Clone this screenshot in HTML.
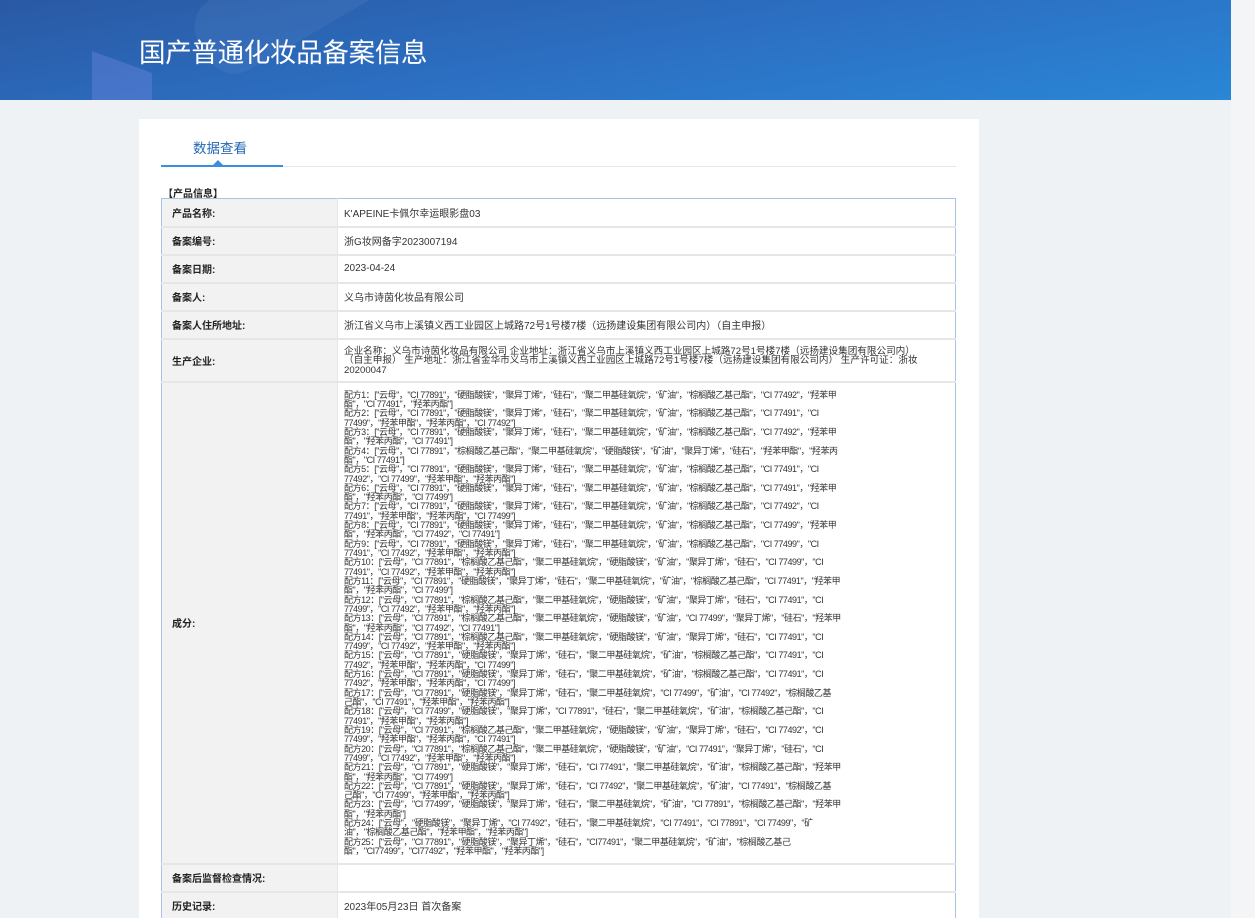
<!DOCTYPE html>
<html><head><meta charset="utf-8">
<style>
*{margin:0;padding:0;box-sizing:border-box}
html,body{overflow:hidden}
body{width:1255px;height:918px;background:#eef2f5;font-family:"Liberation Sans","Noto Sans CJK SC",sans-serif;position:relative}
.banner{position:absolute;left:0;top:0;width:1231px;height:100px;background:linear-gradient(170deg,#2a59a4 0%,#2c6fc2 50%,#2a86d6 100%);overflow:hidden}
.banner .s1{position:absolute;left:190px;top:-40px;width:200px;height:80px;background:rgba(255,255,255,.05);transform:rotate(-30deg);border-radius:30px}
.banner .s2{position:absolute;left:92px;top:62px;width:60px;height:60px;background:rgba(120,140,230,.35);transform:skewY(20deg)}
.banner h1{position:absolute;left:139px;top:31px;color:#fff;font-size:26.5px;font-weight:normal;letter-spacing:-0.3px;font-family:"Liberation Sans","Noto Sans CJK SC",sans-serif}
.strip{position:absolute;left:1231px;top:0;width:24px;height:918px;background:#f3f5f7}
.card{position:absolute;left:139px;top:119px;width:840px;height:799px;background:#fff;overflow:hidden}
.tab{position:absolute;left:20px;top:18px;width:122px;text-align:center;color:#2468b4;font-size:13.5px}
.tabline{position:absolute;left:22px;top:47px;width:795px;height:1px;background:#e4e8ec}
.tabline2{position:absolute;left:22px;top:46px;width:122px;height:2px;background:#3a8ee0}
.tri{position:absolute;left:74px;top:41px;width:0;height:0;border-left:5px solid transparent;border-right:5px solid transparent;border-bottom:5px solid #3a8ee0}
.sec{position:absolute;left:24px;top:66px;font-size:10px;font-weight:bold;color:#222}
table{position:absolute;left:22px;top:79px;width:795px;border-collapse:collapse;border:1px solid #a9c3e6;font-size:10px;color:#333}
td{border-bottom:2px solid #e6e6e6;vertical-align:middle}
td.l{width:176px;background:#f2f2f2;font-weight:bold;padding-left:10px;border-right:1px solid #e6e6e6;color:#222}
td.v{padding-left:6px}
.f{padding-top:7px!important;padding-bottom:5px}
.f div{white-space:nowrap;font-size:9px;line-height:9.32px;height:9.32px;letter-spacing:-0.45px}
</style></head><body>
<div class="banner"><div class="s1"></div><div class="s2"></div><h1>国产普通化妆品备案信息</h1></div>
<div class="strip"></div>
<div class="card">
<div class="tab">数据查看</div>
<div class="tabline"></div><div class="tabline2"></div><div class="tri"></div>
<div class="sec">【产品信息】</div>
<table>
<tr style="height:28px"><td class="l">产品名称:</td><td class="v">K'APEINE卡佩尔幸运眼影盘03</td></tr>
<tr style="height:28px"><td class="l">备案编号:</td><td class="v">浙G妆网备字2023007194</td></tr>
<tr style="height:28px"><td class="l">备案日期:</td><td class="v">2023-04-24</td></tr>
<tr style="height:28px"><td class="l">备案人:</td><td class="v">义乌市诗茵化妆品有限公司</td></tr>
<tr style="height:28px"><td class="l">备案人住所地址:</td><td class="v">浙江省义乌市上溪镇义西工业园区上城路72号1号楼7楼（远扬建设集团有限公司内）（自主申报）</td></tr>
<tr style="height:43px"><td class="l">生产企业:</td><td class="v" style="font-size:9.6px;line-height:9.5px;padding-top:2px">企业名称：义乌市诗茵化妆品有限公司 企业地址：浙江省义乌市上溪镇义西工业园区上城路72号1号楼7楼（远扬建设集团有限公司内）<br>（自主申报） 生产地址：浙江省金华市义乌市上溪镇义西工业园区上城路72号1号楼7楼（远扬建设集团有限公司内） 生产许可证：浙妆<br>20200047</td></tr>
<tr style="height:482px"><td class="l">成分:</td><td class="v f">
<div>配方1：["云母"，"CI 77891"，"硬脂酸镁"，"聚异丁烯"，"硅石"，"聚二甲基硅氧烷"，"矿油"，"棕榈酸乙基己酯"，"CI 77492"，"羟苯甲</div><div>酯"，"CI 77491"，"羟苯丙酯"]</div>
<div>配方2：["云母"，"CI 77891"，"硬脂酸镁"，"聚异丁烯"，"硅石"，"聚二甲基硅氧烷"，"矿油"，"棕榈酸乙基己酯"，"CI 77491"，"CI</div><div>77499"，"羟苯甲酯"，"羟苯丙酯"，"CI 77492"]</div>
<div>配方3：["云母"，"CI 77891"，"硬脂酸镁"，"聚异丁烯"，"硅石"，"聚二甲基硅氧烷"，"矿油"，"棕榈酸乙基己酯"，"CI 77492"，"羟苯甲</div><div>酯"，"羟苯丙酯"，"CI 77491"]</div>
<div>配方4：["云母"，"CI 77891"，"棕榈酸乙基己酯"，"聚二甲基硅氧烷"，"硬脂酸镁"，"矿油"，"聚异丁烯"，"硅石"，"羟苯甲酯"，"羟苯丙</div><div>酯"，"CI 77491"]</div>
<div>配方5：["云母"，"CI 77891"，"硬脂酸镁"，"聚异丁烯"，"硅石"，"聚二甲基硅氧烷"，"矿油"，"棕榈酸乙基己酯"，"CI 77491"，"CI</div><div>77492"，"CI 77499"，"羟苯甲酯"，"羟苯丙酯"]</div>
<div>配方6：["云母"，"CI 77891"，"硬脂酸镁"，"聚异丁烯"，"硅石"，"聚二甲基硅氧烷"，"矿油"，"棕榈酸乙基己酯"，"CI 77491"，"羟苯甲</div><div>酯"，"羟苯丙酯"，"CI 77499"]</div>
<div>配方7：["云母"，"CI 77891"，"硬脂酸镁"，"聚异丁烯"，"硅石"，"聚二甲基硅氧烷"，"矿油"，"棕榈酸乙基己酯"，"CI 77492"，"CI</div><div>77491"，"羟苯甲酯"，"羟苯丙酯"，"CI 77499"]</div>
<div>配方8：["云母"，"CI 77891"，"硬脂酸镁"，"聚异丁烯"，"硅石"，"聚二甲基硅氧烷"，"矿油"，"棕榈酸乙基己酯"，"CI 77499"，"羟苯甲</div><div>酯"，"羟苯丙酯"，"CI 77492"，"CI 77491"]</div>
<div>配方9：["云母"，"CI 77891"，"硬脂酸镁"，"聚异丁烯"，"硅石"，"聚二甲基硅氧烷"，"矿油"，"棕榈酸乙基己酯"，"CI 77499"，"CI</div><div>77491"，"CI 77492"，"羟苯甲酯"，"羟苯丙酯"]</div>
<div>配方10：["云母"，"CI 77891"，"棕榈酸乙基己酯"，"聚二甲基硅氧烷"，"硬脂酸镁"，"矿油"，"聚异丁烯"，"硅石"，"CI 77499"，"CI</div><div>77491"，"CI 77492"，"羟苯甲酯"，"羟苯丙酯"]</div>
<div>配方11：["云母"，"CI 77891"，"硬脂酸镁"，"聚异丁烯"，"硅石"，"聚二甲基硅氧烷"，"矿油"，"棕榈酸乙基己酯"，"CI 77491"，"羟苯甲</div><div>酯"，"羟苯丙酯"，"CI 77499"]</div>
<div>配方12：["云母"，"CI 77891"，"棕榈酸乙基己酯"，"聚二甲基硅氧烷"，"硬脂酸镁"，"矿油"，"聚异丁烯"，"硅石"，"CI 77491"，"CI</div><div>77499"，"CI 77492"，"羟苯甲酯"，"羟苯丙酯"]</div>
<div>配方13：["云母"，"CI 77891"，"棕榈酸乙基己酯"，"聚二甲基硅氧烷"，"硬脂酸镁"，"矿油"，"CI 77499"，"聚异丁烯"，"硅石"，"羟苯甲</div><div>酯"，"羟苯丙酯"，"CI 77492"，"CI 77491"]</div>
<div>配方14：["云母"，"CI 77891"，"棕榈酸乙基己酯"，"聚二甲基硅氧烷"，"硬脂酸镁"，"矿油"，"聚异丁烯"，"硅石"，"CI 77491"，"CI</div><div>77499"，"CI 77492"，"羟苯甲酯"，"羟苯丙酯"]</div>
<div>配方15：["云母"，"CI 77891"，"硬脂酸镁"，"聚异丁烯"，"硅石"，"聚二甲基硅氧烷"，"矿油"，"棕榈酸乙基己酯"，"CI 77491"，"CI</div><div>77492"，"羟苯甲酯"，"羟苯丙酯"，"CI 77499"]</div>
<div>配方16：["云母"，"CI 77891"，"硬脂酸镁"，"聚异丁烯"，"硅石"，"聚二甲基硅氧烷"，"矿油"，"棕榈酸乙基己酯"，"CI 77491"，"CI</div><div>77492"，"羟苯甲酯"，"羟苯丙酯"，"CI 77499"]</div>
<div>配方17：["云母"，"CI 77891"，"硬脂酸镁"，"聚异丁烯"，"硅石"，"聚二甲基硅氧烷"，"CI 77499"，"矿油"，"CI 77492"，"棕榈酸乙基</div><div>己酯"，"CI 77491"，"羟苯甲酯"，"羟苯丙酯"]</div>
<div>配方18：["云母"，"CI 77499"，"硬脂酸镁"，"聚异丁烯"，"CI 77891"，"硅石"，"聚二甲基硅氧烷"，"矿油"，"棕榈酸乙基己酯"，"CI</div><div>77491"，"羟苯甲酯"，"羟苯丙酯"]</div>
<div>配方19：["云母"，"CI 77891"，"棕榈酸乙基己酯"，"聚二甲基硅氧烷"，"硬脂酸镁"，"矿油"，"聚异丁烯"，"硅石"，"CI 77492"，"CI</div><div>77499"，"羟苯甲酯"，"羟苯丙酯"，"CI 77491"]</div>
<div>配方20：["云母"，"CI 77891"，"棕榈酸乙基己酯"，"聚二甲基硅氧烷"，"硬脂酸镁"，"矿油"，"CI 77491"，"聚异丁烯"，"硅石"，"CI</div><div>77499"，"CI 77492"，"羟苯甲酯"，"羟苯丙酯"]</div>
<div>配方21：["云母"，"CI 77891"，"硬脂酸镁"，"聚异丁烯"，"硅石"，"CI 77491"，"聚二甲基硅氧烷"，"矿油"，"棕榈酸乙基己酯"，"羟苯甲</div><div>酯"，"羟苯丙酯"，"CI 77499"]</div>
<div>配方22：["云母"，"CI 77891"，"硬脂酸镁"，"聚异丁烯"，"硅石"，"CI 77492"，"聚二甲基硅氧烷"，"矿油"，"CI 77491"，"棕榈酸乙基</div><div>己酯"，"CI 77499"，"羟苯甲酯"，"羟苯丙酯"]</div>
<div>配方23：["云母"，"CI 77499"，"硬脂酸镁"，"聚异丁烯"，"硅石"，"聚二甲基硅氧烷"，"矿油"，"CI 77891"，"棕榈酸乙基己酯"，"羟苯甲</div><div>酯"，"羟苯丙酯"]</div>
<div>配方24：["云母"，"硬脂酸镁"，"聚异丁烯"，"CI 77492"，"硅石"，"聚二甲基硅氧烷"，"CI 77491"，"CI 77891"，"CI 77499"，"矿</div><div>油"，"棕榈酸乙基己酯"，"羟苯甲酯"，"羟苯丙酯"]</div>
<div>配方25：["云母"，"CI 77891"，"硬脂酸镁"，"聚异丁烯"，"硅石"，"CI77491"，"聚二甲基硅氧烷"，"矿油"，"棕榈酸乙基己</div><div>酯"，"CI77499"，"CI77492"，"羟苯甲酯"，"羟苯丙酯"]</div>
</td></tr>
<tr style="height:28px"><td class="l">备案后监督检查情况:</td><td class="v"></td></tr>
<tr style="height:28px"><td class="l">历史记录:</td><td class="v">2023年05月23日 首次备案</td></tr>
</table>
</div>
</body></html>
